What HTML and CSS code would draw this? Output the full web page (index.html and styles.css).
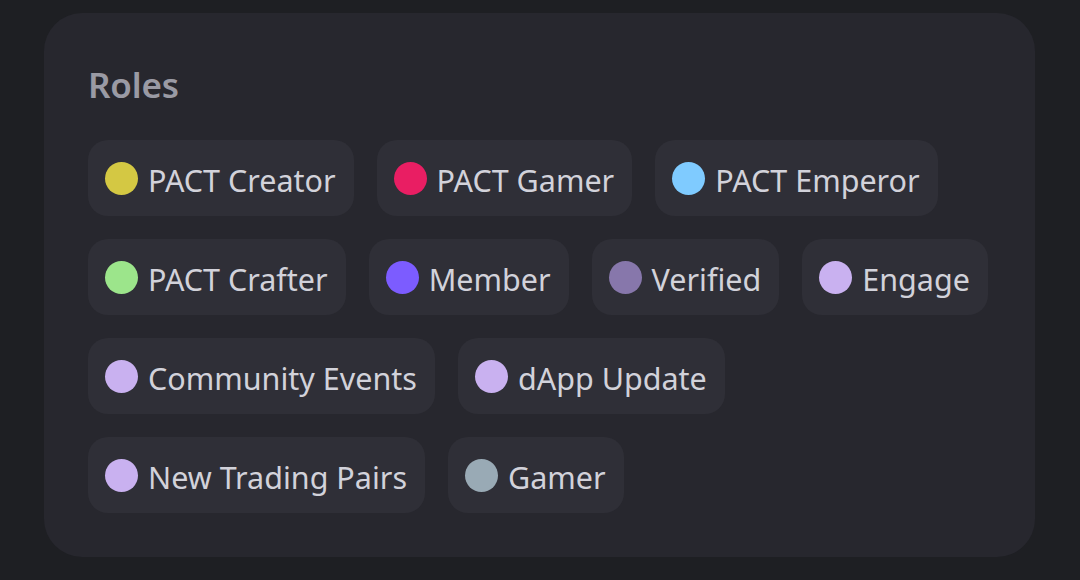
FILE: index.html
```html
<!DOCTYPE html>
<html>
<head>
<meta charset="utf-8">
<link rel="stylesheet" href="styles.css">
</head>
<body>
<div class="card">
  <h2 class="title">Roles</h2>
  <div class="roles">
    <div class="row">
      <span class="chip"><span class="dot c-yellow"></span><span class="label">PACT Creator</span></span>
      <span class="chip"><span class="dot c-pink"></span><span class="label">PACT Gamer</span></span>
      <span class="chip"><span class="dot c-blue"></span><span class="label">PACT Emperor</span></span>
    </div>
    <div class="row">
      <span class="chip"><span class="dot c-green"></span><span class="label">PACT Crafter</span></span>
      <span class="chip"><span class="dot c-purple"></span><span class="label">Member</span></span>
      <span class="chip"><span class="dot c-verified"></span><span class="label">Verified</span></span>
      <span class="chip"><span class="dot c-lav"></span><span class="label">Engage</span></span>
    </div>
    <div class="row">
      <span class="chip"><span class="dot c-lav"></span><span class="label">Community Events</span></span>
      <span class="chip"><span class="dot c-lav"></span><span class="label">dApp Update</span></span>
    </div>
    <div class="row">
      <span class="chip"><span class="dot c-lav"></span><span class="label">New Trading Pairs</span></span>
      <span class="chip"><span class="dot c-gray"></span><span class="label">Gamer</span></span>
    </div>
  </div>
</div>
</body>
</html>
```
FILE: styles.css
```css
html, body {
  margin: 0;
  padding: 0;
  background: #1e1f23;
  width: 1080px;
  height: 580px;
  overflow: hidden;
  font-family: "Noto Sans", "Open Sans", sans-serif;
}
.card {
  margin: 13px 0 0 44px;
  width: 991px;
  height: 544px;
  box-sizing: border-box;
  background: #27272e;
  border-radius: 38px;
  padding: 50px 45px 0 44px;
}
.title {
  margin: 0;
  font-size: 35px;
  line-height: 44px;
  font-weight: 600;
  color: #9a9aa4;
  letter-spacing: -0.2px;
}
.roles {
  margin-top: 33px;
  display: flex;
  flex-direction: column;
  gap: 23px;
}
.row {
  display: flex;
  gap: 23px;
}
.chip {
  display: inline-flex;
  align-items: center;
  height: 76px;
  box-sizing: border-box;
  padding: 0 18px 0 17px;
  background: #2f2f37;
  border-radius: 20px;
  color: #d2d2da;
  font-size: 30.5px;
  white-space: nowrap;
}
.label {
  margin-top: 4px;
}
.dot {
  width: 33px;
  height: 33px;
  border-radius: 50%;
  margin-right: 10px;
  flex: none;
}
.c-yellow { background: #d4c843; }
.c-pink { background: #e91e63; }
.c-blue { background: #7fcbff; }
.c-green { background: #9ce58b; }
.c-purple { background: #7c5cff; }
.c-verified { background: #8777ab; }
.c-lav { background: #c9b1f0; }
.c-gray { background: #99aab5; }
```
